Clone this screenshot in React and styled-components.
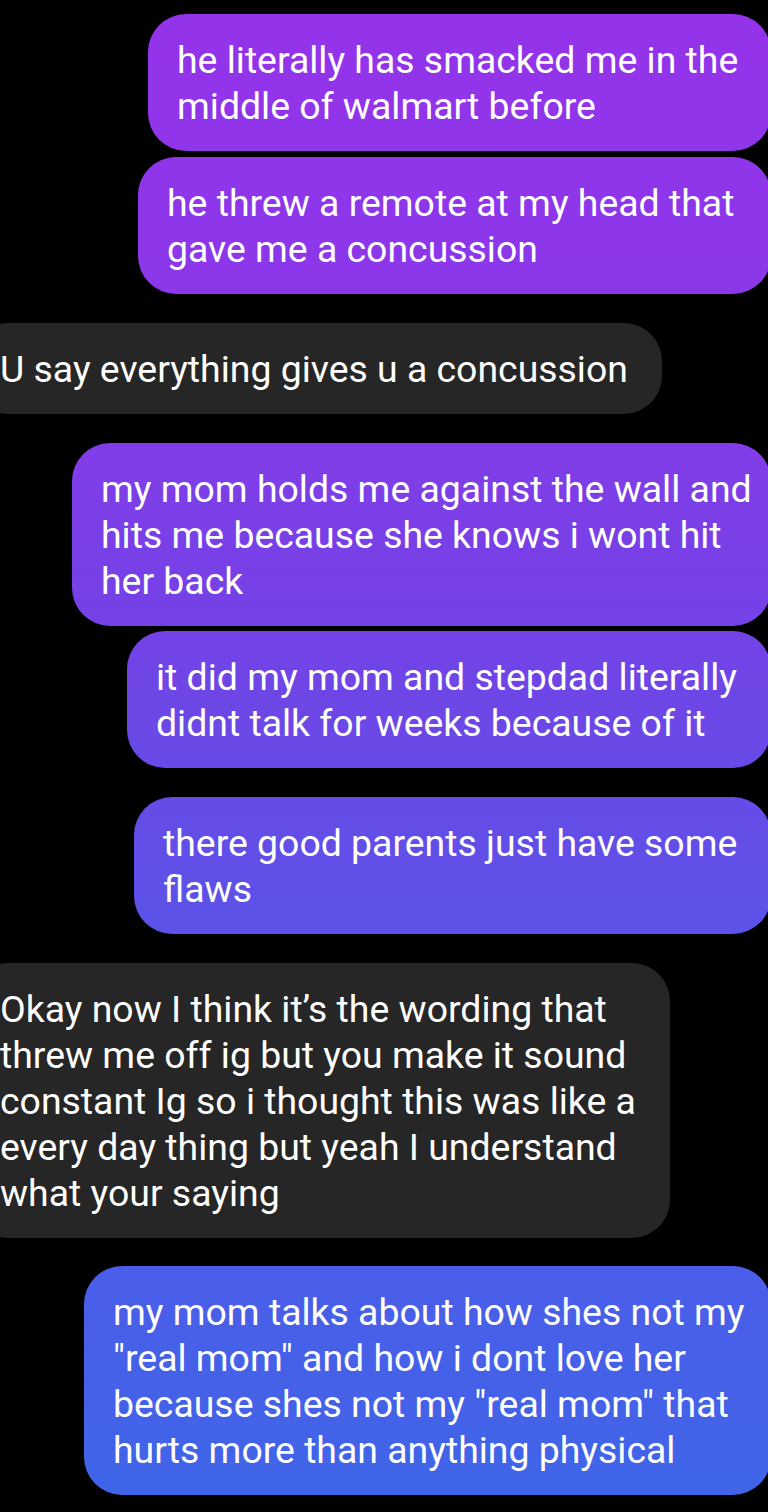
import React from "react";
import styled, { createGlobalStyle } from "styled-components";

const GlobalStyle = createGlobalStyle`
  html, body {
    margin: 0;
    padding: 0;
    background: #000;
    overflow-x: hidden;
  }
  body {
    font-family: Roboto, "Liberation Sans", sans-serif;
    -webkit-font-smoothing: antialiased;
  }
`;

const Thread = styled.div`
  display: flex;
  flex-direction: column;
  width: 768px;
  min-height: 1512px;
  padding-top: 14px;
  box-sizing: border-box;
  background: #000;
  overflow: hidden;
`;

const Bubble = styled.div`
  width: ${(p) => p.$width}px;
  box-sizing: border-box;
  padding: 23px 0 22px 29px;
  border-radius: 38px;
  color: #fff;
  font-size: 37.4px;
  line-height: 46px;
  white-space: nowrap;
  margin-top: ${(p) => p.$gap}px;
`;

const Sent = styled(Bubble)`
  align-self: flex-end;
  margin-right: -3px;
  background: linear-gradient(
    to bottom,
    #9433ea 0px,
    #8c37ea 280px,
    #7442e6 620px,
    #5c52e8 920px,
    #3f65e8 1500px
  );
  background-attachment: fixed;
`;

const Received = styled(Bubble)`
  align-self: flex-start;
  margin-left: -29px;
  background: #262626;
`;

const messages = [
  { me: true, gap: 0, width: 623, lines: ["he literally has smacked me in the", "middle of walmart before"] },
  { me: true, gap: 6, width: 633, lines: ["he threw a remote at my head that", "gave me a concussion"] },
  { me: false, gap: 29, width: 691, lines: ["U say everything gives u a concussion"] },
  {
    me: true,
    gap: 29,
    width: 699,
    lines: ["my mom holds me against the wall and", "hits me because she knows i wont hit", "her back"],
  },
  { me: true, gap: 5, width: 644, lines: ["it did my mom and stepdad literally", "didnt talk for weeks because of it"] },
  { me: true, gap: 29, width: 637, lines: ["there good parents just have some", "flaws"] },
  {
    me: false,
    gap: 29,
    width: 699,
    lines: [
      "Okay now I think it\u2019s the wording that",
      "threw me off ig but you make it sound",
      "constant Ig so i thought this was like a",
      "every day thing but yeah I understand",
      "what your saying",
    ],
  },
  {
    me: true,
    gap: 28,
    width: 687,
    lines: [
      "my mom talks about how shes not my",
      "\"real mom\" and how i dont love her",
      "because shes not my \"real mom\" that",
      "hurts more than anything physical",
    ],
  },
];

function App() {
  return (
    <>
      <GlobalStyle />
      <Thread>
        {messages.map((m, i) => {
          const Tag = m.me ? Sent : Received;
          return (
            <Tag key={i} $gap={m.gap} $width={m.width}>
              {m.lines.map((l, j) => (
                <React.Fragment key={j}>
                  {j > 0 && <br />}
                  {l}
                </React.Fragment>
              ))}
            </Tag>
          );
        })}
      </Thread>
    </>
  );
}

export default App;
